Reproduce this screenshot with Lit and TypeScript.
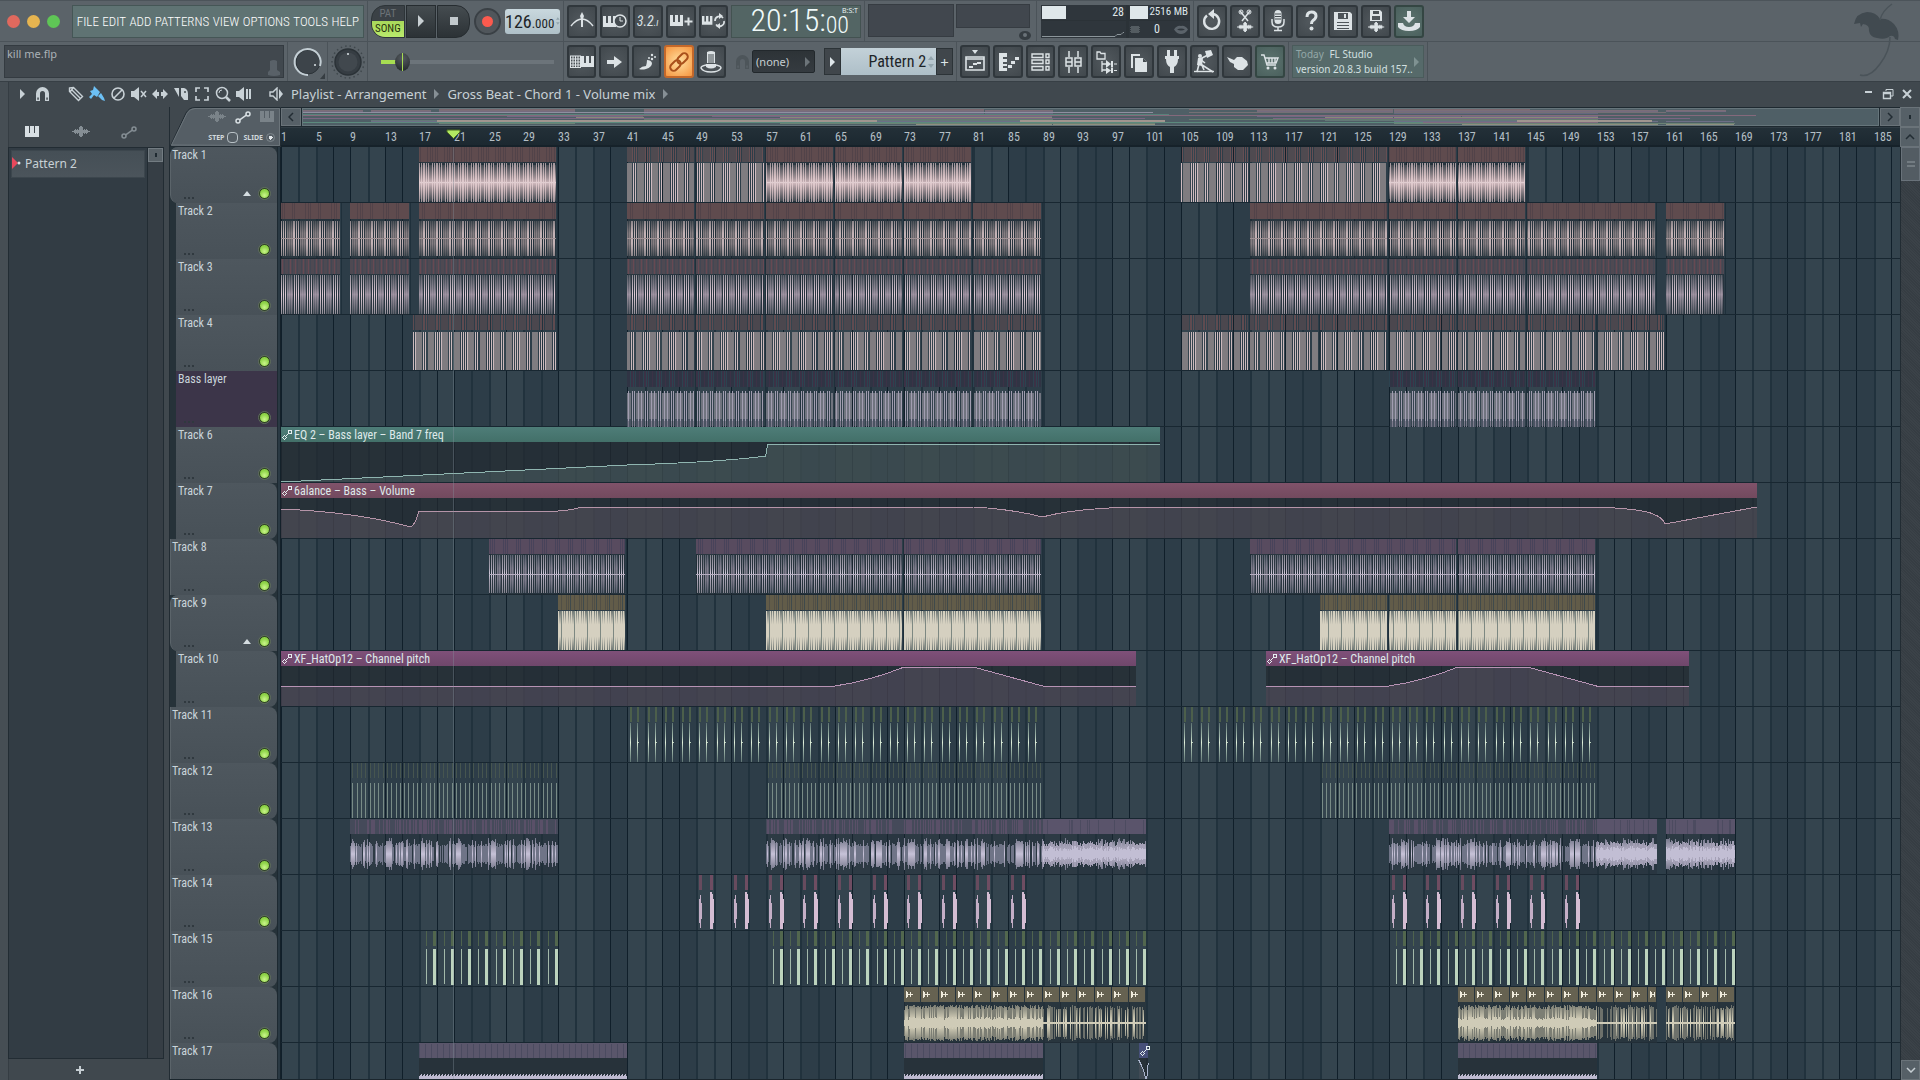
import { LitElement, html, svg, css, nothing } from "lit";
import { customElement, state } from "lit/decorators.js";

/* ---------- timeline scale ---------- */
const BAR = 8.655;
const BARS = 320;
const LANE = 56;
const px = (bar: number) => Math.round((bar - 1) * BAR);

/* ---------- song data ---------- */
type Span = [number, number];
interface Automation { from: number; to: number; title: string; head: string; line: string; curve: string }
interface Track {
  name: string;
  child?: boolean;
  fold?: boolean;
  last?: boolean;
  tint?: string;
  style?: string;
  alt?: string;
  spans?: Span[];
  altSpans?: Span[];
  autos?: Automation[];
}

const blocks = (from: number, to: number, step = 8): Span[] => {
  const out: Span[] = [];
  for (let b = from; b < to; b += step) out.push([b, Math.min(b + step, to)]);
  return out;
};

const kickSpans: Span[] = [[1, 8], [9, 16], [17, 33], ...blocks(41, 89), [113, 129], [129, 137], [137, 145], [145, 160], [161, 168]];

const X = (b: number) => (b - 1) * BAR;

const tracks: Track[] = [
  { name: "Track 1", fold: true, style: "t1a", spans: [[17, 33], ...blocks(57, 81), ...blocks(129, 145)], alt: "t1b", altSpans: [...blocks(41, 57), [105, 113], [113, 129]] },
  { name: "Track 2", child: true, style: "t2", spans: kickSpans },
  { name: "Track 3", child: true, style: "t3", spans: kickSpans },
  { name: "Track 4", child: true, style: "t4", spans: [[16.1, 33], ...blocks(41, 89), ...blocks(105, 161)] },
  { name: "Bass layer", child: true, tint: "bass", style: "t5", spans: [...blocks(41, 89), ...blocks(129, 153)] },
  {
    name: "Track 6", child: true,
    autos: [{
      from: 1, to: 102.6, title: "EQ 2 – Bass layer – Band 7 freq", head: "teal", line: "#8fb5b0",
      curve: `M0 55 L${X(41)} 38 Q${X(52)} 35 ${X(57)} 29 L${X(57) + 2} 17 L${X(102.6)} 17`,
    }],
  },
  {
    name: "Track 7", child: true, last: true,
    autos: [{
      from: 1, to: 171.5, title: "6alance – Bass – Volume", head: "rose", line: "#b594a8",
      curve: `M0 26 Q75 29 130 44 Q135 40 138 28 L${X(33)} 28 Q292 27 300 24 L${X(81)} 24 Q730 26 ${X(89)} 34 Q790 26 850 24 L${X(153)} 24 Q1365 26 1374 32 Q1381 34 1384 41 L${X(171.5)} 24`,
    }],
  },
  { name: "Track 8", last: true, style: "t8", spans: [[25, 41], [49, 73], [73, 89], [113, 137], [137, 153]] },
  { name: "Track 9", fold: true, style: "t9", spans: [[33, 41], [57, 73], [73, 89], [121, 129], [129, 137], [137, 153]] },
  {
    name: "Track 10", child: true, last: true,
    autos: [
      { from: 1, to: 99.8, title: "XF_HatOp12 – Channel pitch", head: "plum", line: "#b793b4",
        curve: `M0 35 L${X(65)} 35 Q${X(69)} 30 ${X(73)} 16 L${X(81)} 16 L${X(89)} 35 L${X(99.8)} 35` },
      { from: 114.8, to: 163.7, title: "XF_HatOp12 – Channel pitch", head: "plum", line: "#b793b4",
        curve: `M${X(114.8)} 35 L${X(129)} 35 Q${X(133)} 30 ${X(137)} 16 L${X(145)} 16 L${X(153)} 35 L${X(163.7)} 35` },
    ],
  },
  { name: "Track 11", last: true, style: "hat", spans: [[41, 89], [105, 153]] },
  { name: "Track 12", last: true, style: "shaker", spans: [[9, 33], [57, 89], [121, 153]] },
  { name: "Track 13", last: true, style: "texture", spans: [[9, 33], [57, 89], [129, 153]], alt: "textureDense", altSpans: [[89, 101], [153, 160], [161, 169]] },
  { name: "Track 14", last: true, style: "clap", spans: [[49, 89], [129, 153]] },
  { name: "Track 15", last: true, style: "perc", spans: [[17, 33], [57, 101], [129, 169]] },
  { name: "Track 16", last: true, style: "lead", spans: [[73, 89], [137, 153]], alt: "leadThin", altSpans: [[89, 101], [153, 160], [161, 169]] },
  {
    name: "Track 17", last: true, style: "pad", spans: [[17, 41], [73, 89], [137, 153]],
    autos: [{ from: 100.1, to: 101.2, title: "", head: "navy", line: "#aab4cc", curve: `M${X(100.1)} 17 Q${X(100.6)} 24 ${X(101)} 38 L${X(101.2)} 20` }],
  },
];

/* ---------- striped waveform patterns ---------- */
type Paint = [number, number, string];
interface Stripe { id: string; cols: string; map: Record<string, Paint[]> }
const stripes: Stripe[] = [
  { id: "t1a-h", cols: "bababbbbbbabbabab", map: { a: [[0, 15, "#524349"]], b: [[0, 15, "#5f4b4e"]] } },
  { id: "t1a-w", cols: "#m#d#mmm#d#m#", map: { "#": [[16, 55, "url(#g-pink)"]], m: [[18, 54, "url(#g-pinkm)"]], d: [[20, 52, "url(#g-pinkm)"]] } },
  { id: "t1b-h", cols: "a.a.a.bbbbbbb", map: { a: [[0, 15, "#674f53"]], b: [[0, 15, "#4f4a50"]] } },
  { id: "t1b-w", cols: "#.#.#.#gggggg.#.#.ggggggg.", map: { "#": [[16, 55, "#cfbabf"]], g: [[16, 55, "#7f7c80"]] } },
  { id: "t2-h", cols: "bababbbbbbbababbbbbbbbbbab", map: { a: [[0, 16, "#524349"]], b: [[0, 16, "#5f4b4e"]] } },
  { id: "t2-w", cols: "#.#.#.mdmdmd#", map: { "#": [[18, 53, "url(#g-kick)"]], m: [[18, 53, "url(#g-kickm)"]], d: [[18, 53, "url(#g-kickd)"]] } },
  { id: "t3-h", cols: "babcbbbcbabcb", map: { a: [[0, 15, "#674953"]], b: [[0, 15, "#4f4952"]], c: [[0, 15, "#434753"]] } },
  { id: "t3-w", cols: "#.#.#.mdmdmd.", map: { "#": [[16, 55, "url(#g-snare)"]], m: [[16, 55, "url(#g-snarem)"]], d: [[16, 55, "url(#g-snared)"]] } },
  { id: "t4-h", cols: "a.a.bbbbbbb.a", map: { a: [[0, 15, "#5f4b50"]], b: [[0, 15, "#4b474e"]] } },
  { id: "t4-w", cols: "#.#.#gggggg.#.#..gggggg.#.", map: { "#": [[17, 55, "#cbb9bc"]], g: [[17, 55, "#7f7c80"]] } },
  { id: "t5-h", cols: "ababcccacccba", map: { a: [[0, 16, "#3b3246"]], b: [[0, 16, "#2c4350"]], c: [[0, 16, "#303444"]] } },
  { id: "t5-w", cols: "#.#.gg#gg#gg.", map: { "#": [[20, 50, "#a19db0"], [50, 56, "#7c7a8c"]], g: [[22, 48, "#70747f"], [48, 56, "#4a5362"]] } },
  { id: "t8-h", cols: "babababbbbbbb", map: { a: [[0, 15, "#48435a"]], b: [[0, 15, "#584b5f"]] } },
  { id: "t8-w", cols: "#.#.#.m.mdmd.", map: { "#": [[16, 54, "url(#g-lilac)"]], m: [[16, 54, "url(#g-lilacm)"]], d: [[16, 54, "url(#g-lilacd)"]] } },
  { id: "t9-h", cols: "babcbbbabbbba", map: { a: [[0, 15, "#514f46"]], b: [[0, 15, "#625c49"]], c: [[0, 15, "#3f4a4c"]] } },
  { id: "t9-w", cols: "#m#m#mmg#m#m#", map: { "#": [[16, 55, "#d5d0c0"]], m: [[16, 55, "url(#g-cream)"]], g: [[16, 55, "#7d8882"]] } },
];

const patternDefs = stripes.map(s => svg`
  <pattern id=${s.id} width=${s.cols.length} height=${LANE} patternUnits="userSpaceOnUse">
    ${[...s.cols].map((c, i) => (s.map[c] ?? []).map(([a, b, f]) => svg`<rect x=${i} y=${a} width="1" height=${b - a} fill=${f}></rect>`))}
  </pattern>`);

const fade = (id: string, mid: string, edge: string, core = mid) => svg`
  <linearGradient id=${id} x1="0" x2="0" y1="0" y2="1">
    <stop offset="0" stop-color=${edge}></stop><stop offset=".35" stop-color=${mid}></stop>
    <stop offset=".5" stop-color=${core}></stop>
    <stop offset=".65" stop-color=${mid}></stop><stop offset="1" stop-color=${edge}></stop>
  </linearGradient>`;

const gradientDefs = [
  fade("g-pink", "#d6bfc2", "#a0949a", "#e2cdd0"), fade("g-pinkm", "#9f9095", "#434a51", "#d0b9bd"),
  fade("g-kick", "#c3b2b5", "#8c858a"), fade("g-kickm", "#857d81", "#4c5258"), fade("g-kickd", "#666469", "#343e46"),
  fade("g-snare", "#c8b8c4", "#8f8b95", "#e0c9d5"), fade("g-snarem", "#88838f", "#5c6069", "#a094a3"), fade("g-snared", "#6c6b78", "#39444e", "#928796"),
  fade("g-lilac", "#a9a3b4", "#85848f", "#d3cbdc"), fade("g-lilacm", "#807e8c", "#5a6270"), fade("g-lilacd", "#626474", "#333f4a"),
  fade("g-hat", "#a5bcae", "#5f7473", "#dfeeda"), fade("g-lead", "#c9c5b0", "#7c7e74", "#dedac6"),
  fade("g-tex", "#aeaabf", "#737689", "#c6c2d8"), fade("g-cream", "#d5d0c0", "#6e7674"),
];

/* deterministic pseudo-random value per pixel column */
const noise = (n: number) => {
  const v = Math.sin(n * 12.9898) * 43758.5453;
  return v - Math.floor(v);
};
const columns = (a: number, b: number, mid: number, h: (x: number) => number) => {
  let d = "";
  for (let x = a; x < b; x++) {
    const r = Math.round(h(x));
    if (r > 0) d += `M${x} ${mid - r}h1v${r * 2}h-1z`;
  }
  return d;
};

const midlines: Record<string, string> = { t1a: "#e0cdd0", t2: "#9f9194", t8: "#b5adc0" };
const shades: Record<string, boolean> = { t1a: true, t2: true, t3: true, t8: true };

function clip(style: string, [from, to]: Span) {
  const a = px(from), end = px(to), w = end - a - 2;
  const hit = (step: number, offs: number[], draw: (x: number, i: number) => unknown) => {
    const out: unknown[] = [];
    for (let t = from; t < to - 0.1; t += step) offs.forEach((o, i) => out.push(draw(Math.round(X(t) + o), i)));
    return out;
  };
  switch (style) {
    case "hat":
      return hit(2, [3, 10], (x, i) => svg`<path d="M${x} 0h2v15h-2z" fill="#4c5f4b"></path><path d="M${x} 16h1v39h-1z" fill="url(#g-hat)"></path>${i ? svg`<path d="M${x + 1} 35h1v1h-1z" fill="#b9cfbb"></path>` : nothing}`);
    case "shaker":
      return hit(0.5, [2], x => svg`<path d="M${x} 0h1v15h-1z" fill="#46554f"></path><path d="M${x} 20h1v35h-1z" fill="#788b86"></path>`);
    case "clap":
      return hit(4, [3, 14], (x, i) => i
        ? svg`<path d="M${x} 0h3v15h-3z" fill="#6f4d62"></path><path d="M${x} 17h2v2h1v5h1v24h-1v6h-3z" fill="#d5bdd3"></path>`
        : svg`<path d="M${x} 0h3v15h-3z" fill="#674b5e"></path><path d="M${x} 24h1v-4h1v8h1v16h-1v9h-1v-5h-1z" fill="#c4aec6"></path>`);
    case "perc":
      return hit(2, [7, 14], (x, i) => i
        ? svg`<path d="M${x} 0h3v15h-3z" fill="#52674e"></path><path d="M${x} 18h3v36h-3z" fill="#bcd3bd"></path>`
        : svg`<path d="M${x} 0h1v15h-1z" fill="#4f634e"></path><path d="M${x} 18h1v35h-1z" fill="#a3b9aa"></path>`);
    case "texture":
    case "textureDense": {
      const dense = style === "textureDense";
      return svg`
        <rect x=${a} y="0" width=${end - a} height="15" fill=${dense ? "#5a546b" : "#454a5a"}></rect>
        <path d=${columns(a, end, 8, x => (noise(x + 3) > (dense ? 0.86 : 0.6) ? 7 : 0))} fill=${dense ? "#4c4b60" : "#5a5068"}></path>
        <rect x=${a} y="15" width=${end - a} height="41" fill="#232e36" opacity=".4"></rect>
        <path d=${columns(a, end, 35, x => (dense ? 8 + noise(x) * 5 : noise(x + 31) > 0.2 ? 7 + noise(x) * 4 : 0))} fill=${dense ? "#a4a0b6" : "#6f7487"}></path>
        <path d=${columns(a, end, 35, x => (noise(x * 1.7) > (dense ? 0.6 : 0.72) || (!dense && x % 35 < 4) ? 11 + noise(x + 9) * 5 : 0))} fill="url(#g-tex)"></path>
        ${dense ? svg`<path d=${columns(a, end, 35, x => 3 + noise(x) * 5)} fill="#c2bed4"></path>` : nothing}`;
    }
    case "lead":
    case "leadThin": {
      const thin = style === "leadThin";
      const segs: unknown[] = [];
      for (let t = from; t < to; t += 2) {
        const s = px(t);
        const width = Math.min(px(t + 2), end) - s - 1;
        const tail = width > 10 ? 5 : 3;
        segs.push(svg`<rect x=${s} y="0" width=${width} height="15" fill="#666251"></rect>
          <path d="M${s + 2} 4h1v7h-1zM${s + 3} 5h1v5h-1zM${s + 4} 7h${tail}v1h-${tail}zM${s + 6} 5h1v5h-1z" fill="#efebdc"></path>`);
      }
      return svg`
        <rect x=${a} y="0" width=${end - a} height="56" fill="#26313a" opacity=".75"></rect>${segs}
        <path d=${columns(a, end, 36, x => (thin ? (noise(x) > 0.45 ? 14 + noise(x + 2) * 4 : 0) : 13 + noise(x) * 5))} fill=${thin ? "#6d716b" : "#7c7e74"}></path>
        <path d=${columns(a, end, 36, x => (noise(x * 1.3) > (thin ? 0.78 : 0.5) ? (thin ? 13 : 15) + noise(x + 5) * 3 : 0))} fill="url(#g-lead)"></path>
        <path d=${columns(a, end, 36, x => (thin ? 1 : 3 + noise(x) * 3))} fill="#cfcbb7"></path>`;
    }
    case "pad":
      return svg`
        <rect x=${a} y="0" width=${end - a} height="56" fill="#27323a"></rect>
        <rect x=${a} y="0" width=${end - a} height="15" fill="#5a566b"></rect>
        <path d=${columns(a, end, 8, x => (x % 6 < 1 ? 7 : 0))} fill="#4b4b60"></path>
        <path d=${columns(a, end, 56, x => 23 + (x % 3))} fill="#bdb9cf"></path>`;
    default:
      return svg`
        ${shades[style] ? svg`<rect x=${a} y="15" width=${w} height="41" fill="#1f2a32" opacity=".5"></rect>` : nothing}
        <rect x=${a} y="0" width=${w} height="16" fill="url(#${style}-h)"></rect>
        <rect x=${a} y="16" width=${w} height="40" fill="url(#${style}-w)"></rect>
        ${midlines[style] ? svg`<rect x=${a} y="35" width=${w} height="1" fill=${midlines[style]}></rect>` : nothing}
        <rect x=${end - 1} y="0" width="1" height="55" fill="#1f303b"></rect>`;
  }
}

const heads: Record<string, string> = { teal: "url(#h-teal)", rose: "url(#h-rose)", plum: "url(#h-plum)", navy: "#475079" };
const headDefs = [["teal", "#4e7d78", "#437069"], ["rose", "#80526a", "#724a5e"], ["plum", "#7f5079", "#6f476b"]].map(([n, a, b]) => svg`
  <linearGradient id="h-${n}" x1="0" x2="0" y1="0" y2="1"><stop offset="0" stop-color=${a}></stop><stop offset="1" stop-color=${b}></stop></linearGradient>`);

function automation(m: Automation) {
  const a = px(m.from), b = px(m.to);
  return svg`
    <rect x=${a} y="15" width=${b - a} height="40" fill="#222a30" opacity=".72"></rect>
    <path d="${m.curve} L${X(m.to)} 55 L${X(m.from)} 55 Z" fill=${m.line} opacity=".2"></path>
    <path d=${m.curve} fill="none" stroke=${m.line}></path>
    <rect x=${a} y="0" width=${b - a} height="15" rx="1" fill=${heads[m.head]}></rect>
    <g transform="translate(${a + 1} 2)" fill="none" stroke="#e6eef0"><circle cx="2.5" cy="8.5" r="1.7"></circle><circle cx="8" cy="3" r="1.7"></circle><path d="M3.7 7.3 6.8 4.2"></path></g>
    ${m.title ? svg`<text x=${a + 13} y="12" class="clip-title">${m.title}</text>` : nothing}`;
}

/* ---------- icons ---------- */
const icon = (body: unknown, w = 24, h = 24) => html`<svg width=${w} height=${h} viewBox="0 0 ${w} ${h}" aria-hidden="true">${body}</svg>`;
const piano = svg`<path d="M0 0h4v7h1V0h4v7h1V0h4v11H0z" fill="currentColor"></path>`;
const at = (x: number, y: number, body: unknown, s = 1) => svg`<g transform="translate(${x} ${y}) scale(${s})">${body}</g>`;
const pianoKeys = svg`<path d="M0 0h3v7h2V0h3v7h2V0h3v11H0z" fill="currentColor"></path>`;
const waveGlyph = svg`<path d="M0 5h2V4h1V3h1v1h1V3h1v1h1V1h1V0h2v1h1v3h1V3h1v1h1V3h1v1h1v1h2v1h-2v1h-1v1h-1V7h-1v1h-1V7h-1v3h-1v1H8v-1H7V7H6v1H5V7H4v1H3V7H2V6H0z" fill="currentColor"></path>`;
const autoGlyph = svg`<g fill="none" stroke="currentColor" stroke-width="1.5"><circle cx="3" cy="10" r="2"></circle><circle cx="13" cy="3" r="2"></circle><path d="M4.7 8.8 11.3 4.2"></path></g>`;
const line = (d: string, w = 2) => svg`<path d=${d} fill="none" stroke="currentColor" stroke-width=${w}></path>`;
const solid = (d: string) => svg`<path d=${d} fill="currentColor" fill-rule="evenodd"></path>`;
const magnet = svg`<path d="M0 14V6.5a6.500 6.500 0 0 1 13 0V14H9V6.500a2.500 2.500 0 0 0-5 0V14zM1.300 10.500v2.200h1.500v-2.200zm9 0v2.200h1.500v-2.200z" fill="currentColor" fill-rule="evenodd"></path>`;

const I = {
  metronome: icon([line("M1 17Q12 3 23 17", 1.5), solid("M12 3l2 4-1 3v8h-2v-8l-1-3z")]),
  wait: icon([at(0, 7, pianoKeys), svg`<circle cx="17" cy="12" r="6" fill="#454c51" stroke="currentColor" stroke-width="1.5"></circle>`, line("M17 8v4h3", 1)]),
  overdub: icon([at(1, 6, pianoKeys), line("M19.5 8.500v8M15.500 12.500h8", 2)]),
  loopRec: icon([at(0, 7, pianoKeys, 0.8), line("M13 12a4.500 4.500 0 0 1 8-3M22 12a4.500 4.500 0 0 1-8 3.500", 1.7), solid("M17 4l4 3-4 3zM18 20l-4-3 4-3z")]),
  undo: icon([line("M7 6.500a7.500 7.500 0 1 0 6-1.500", 2.4), solid("M14 0v10L8 5z")]),
  cut: icon([line("M7 2l8 10M17 2L9 12", 1.5), svg`<circle cx="8" cy="3" r="2" fill="none" stroke="currentColor"></circle><circle cx="16" cy="3" r="2" fill="none" stroke="currentColor"></circle>`, at(4, 13, waveGlyph, 0.9)]),
  mic: icon([svg`<rect x="8.5" y="1" width="7" height="14" rx="3.5" fill="currentColor"></rect>`, svg`<path d="M9 5h6M9 7.5h6M9 10h6" stroke="#454c51"></path>`, line("M6 10v3q0 5 6 5t6-5v-3M12 18v3M8 21.5h8", 1.5)]),
  help: icon([line("M8 8q0-5 4.5-5T17 7q0 2.500-3 4.500-1.500 1-1.500 3.500", 3), svg`<circle cx="12.5" cy="19.5" r="2" fill="currentColor"></circle>`]),
  save: icon([solid("M3 3h16l2 2v16H3zM7 4v6h10V4zM6 13v8h12v-8z"), solid("M13 5h2v4h-2zM6 14h12v2H6zM6 17h12v2H6zM6 20h12v1H6z")]),
  saveNew: icon([at(6, 0, solid("M0 1h10l2 2v9H0zM3 2v3h6V2zM2 7v4h8V7z")), at(4, 13, waveGlyph, 0.9)]),
  tray: icon([solid("M10 2h4v6h4l-6 6-6-6h4zM1 14h5q1 4 6 4t6-4h5v4q-3 4-11 4T1 18z")]),
  typing: icon([svg`<path d="M0 6h11M0 9h11M0 12h11M0 15h11M0 17.5h11M.5 6v12M3 6v12M5.500 6v12M8 6v12M10.500 6v12" stroke="currentColor" stroke-width="1"></path>`, at(11, 6, pianoKeys)]),
  arrow: icon([solid("M5 10h7V6l8 6-8 6v-4H5z")]),
  slide: icon([solid("M4 19q3-3 7-3 1-3 1-6 4 0 5 3 0 4-6 6-4 1-7 0z"), svg`<circle cx="14" cy="8" r="1" fill="currentColor"></circle><circle cx="17" cy="9" r="1.2" fill="currentColor"></circle><circle cx="17" cy="5" r="1.2" fill="currentColor"></circle><circle cx="20" cy="7" r="1" fill="currentColor"></circle>`]),
  link: icon([svg`<g transform="rotate(-45 12 12)" fill="none" stroke="#a9501b" stroke-width="2"><rect x="1" y="8.5" width="12" height="7" rx="3.5"></rect><rect x="11" y="8.5" width="12" height="7" rx="3.5"></rect></g>`]),
  hat: icon([solid("M8 2q4-2 8 0v11h-8z"), line("M7 15q-5 1-5 3 2 4 10 4t10-4q0-2-5-3", 1.5), solid("M7 14h10v3q-5 3-10 0z"), svg`<path d="M10 4v10M12 4v10M14 4v10" stroke="#454c51" fill="none"></path>`]),
  playlist: icon([solid("M9 0h6l-3 4z"), line("M3 7h18v13H3zM3 9h18", 1.6), solid("M6 16h4v2H6zM10 13h4v2h-4zM14 12h4v2h-4z")]),
  roll: icon([solid("M3 3h8v4H7v2h4v3H7v2h4v2H7v2h4v3H3z"), solid("M12 15h4v3h-4zM15 11h4v3h-4zM19 7h4v3h-4z")]),
  rack: icon([line("M4 4h11v3.5H4zM4 10h11v3.500H4zM4 16.500h11V20H4zM18 4h3v3.500h-3zM18 10h3v3.500h-3zM18 16.500h3V20h-3z", 1.4)]),
  mixer: icon([line("M8 1v6M17 1v6M8 17v6M17 17v6", 1.5), line("M5 8h6v8H5zM14 8h6v8h-6zM5 12h6M14 12h6", 1.5)]),
  tree: icon([line("M3 2h3l1 1.5h4V9H3zM8 11v11M8 14h4M8 20h4", 1.3), solid("M12 10l5 4-5 4zM17 11h2v6h-2zM20 13.500h3v1h-3zM12 17l5 3.500-5 3.500zM17 17.500h2V23h-2zM20 20h3v1h-3z")]),
  copy: icon([solid("M4 4h9v2H6v12H4zM8 8h8l4 4v10H8z"), svg`<path d="M16 8v4h4z" fill="#454c51"></path>`]),
  plug: icon([solid("M7 0h3v6H7zM14 0h3v6h-3zM5 6h14v3h-1q0 6-4 8v6h-4v-6q-4-2-4-8H5z")]),
  digger: icon([line("M16 5l-8 4 5 4M8 10l-3 12M9 13l3 7M7 13l14 9", 1.6), svg`<circle cx="8" cy="6" r="2" fill="currentColor"></circle>`, solid("M13 1l6-1 2 5-6 3zM6 8h5l-1 8-5-1z"), line("M2 21.500h20", 1.4)]),
  hand: icon([solid("M2 7l7 3 3-3 5 0 5 4 1 4-5 5-5 0-4-3 0-3-4-2z")]),
  cart: icon([line("M3 5h3l3 10h9M7 8h13l-2 5H9M11 8v5M14 8v5M17 8v5", 1.4), svg`<circle cx="10" cy="18" r="1.5" fill="currentColor"></circle><circle cx="17" cy="18" r="1.5" fill="currentColor"></circle>`]),
};

const small = (body: unknown) => icon(body, 16, 16);
const tools: [string, unknown, string?][] = [
  ["Draw", small([line("M1.5 2l4-.5 9 9-4 4-9-9zM4 4l8 8M5 2l-3 4", 1.4)])],
  ["Paint", small(solid("M5 0l3 3 3 3-3 5-3-2-3 4-2-2 3-3-2-3 3-1zM9 10l3-3 3 5 1 3-3-1z")), "blue"],
  ["Delete", small([svg`<circle cx="8" cy="8" r="6" fill="none" stroke="currentColor" stroke-width="1.6"></circle>`, line("M4 12L12 4", 1.6)])],
  ["Mute", small([solid("M0 5h3l5-4v14l-5-4H0z"), line("M10 5l5 6M15 5l-5 6", 1.5)])],
  ["Slip", small(solid("M0 8l5-5v3h2v4H5v3zM16 8l-5-5v3H9v4h2v3z"))],
  ["Slice", small([solid("M1 2h5v9zM8 2h3q4 1 4 6v6h-4l-3-4z"), svg`<circle cx="12" cy="6" r="1" fill="#40484e"></circle>`])],
  ["Select", small(line("M6 2H2v4M10 2h4v4M14 10v4h-4M6 14H2v-4", 1.7))],
  ["Zoom", small([svg`<circle cx="7" cy="7" r="5.5" fill="none" stroke="currentColor" stroke-width="1.5"></circle>`, line("M11 11l4 4", 2.5), line("M4 7q0-3 3-3", 1)])],
  ["Playback", small(solid("M0 5h3l5-4v14l-5-4H0zM10 3h2v10h-2zM13 3h2v10h-2z"))],
];

const btn = (label: string, body: unknown, cls = "") => html`<button class="tool ${cls}" aria-label=${label}>${body}</button>`;
const tri = html`<svg width="5" height="10" viewBox="0 0 5 10" aria-hidden="true"><path d="M0 0l5 5-5 5z" fill="currentColor"></path></svg>`;
const spin = html`<svg class="spin" width="6" height="12" viewBox="0 0 6 12" aria-hidden="true"><path d="M0 4l3-4 3 4zM0 8l3 4 3-4z" fill="#93a5ad"></path></svg>`;

/* ---------- background grid ---------- */
const gridCells: unknown[] = [];
for (let b = 1; b < BARS; b += 2) {
  const x = X(b), x0 = Math.round(x), soft = Math.abs(x - x0) > 0.25;
  gridCells.push(svg`<rect x=${x0} y="0" width="19" height="100%" fill=${(b - 1) % 8 < 4 ? "#34444e" : "#2d3d48"}></rect>
    <rect x=${x0} y="0" width=${soft ? 2 : 1} height="100%" fill=${soft ? "#21323d" : "#101f2a"}></rect>`);
}

@customElement("transport-bar")
class TransportBar extends LitElement {
  static styles = css`
    :host { display: block; flex: none; position: relative; background: #5b6369; color: #dfe6ea; font-family: "Roboto Condensed", "Liberation Sans Narrow", "Open Sans", sans-serif; border-top: 1px solid #4c545a; border-bottom: 1px solid #373f45; }
    * { box-sizing: border-box; }
    .row { display: flex; height: 40px; }
    .row + .row { border-top: 1px solid #4b5359; }
    .group { display: flex; align-items: center; gap: 3px; padding: 0 3px; border-right: 1px solid #4b5359; flex: none; }
    .open { border-right: 0; }
    button { font: inherit; color: inherit; padding: 0; margin: 0; border: 0; background: none; }
    .tool { width: 30px; height: 33px; display: grid; place-items: center; border: 2px solid #30373c; border-radius: 3px; background: radial-gradient(circle, #52595e, #41484d); color: #dde3e6; }
    .green { background: radial-gradient(circle, #5d746f, #4a605d); border-color: #344643; }
    .hot { background: radial-gradient(circle, #ffe0a0, #f6953f); border-color: #c4682a; }
    .count { font-size: 14px; font-style: italic; white-space: nowrap; }
    .count small { font-size: 10px; }
    .lights { width: 68px; display: flex; gap: 7px; padding-left: 3px; }
    .light { width: 13px; height: 13px; border-radius: 50%; }
    .r { background: #e0695e; } .y { background: #e6b450; } .g { background: #5fc556; }
    .menus { width: 293px; height: 33px; display: flex; align-items: center; justify-content: space-between; padding: 0 4px; background: #5f7373; border: 1px solid #455656; }
    .menus button { font-size: 13px; font-weight: 300; color: #ffffff; }
    .first { width: 368px; gap: 0; padding: 0 3px 0 4px; }
    .transport { width: 196px; gap: 1px; }
    .mode { width: 34px; height: 33px; display: flex; flex-direction: column; border-radius: 14px 0 0 14px; overflow: hidden; border: 1px solid #2d3438; font-size: 11px; line-height: 15px; background: #3b4146; }
    .mode button { flex: 1; color: #6b7277; }
    .mode .on { background: linear-gradient(#a9d85a, #b9ea6c); color: #26330f; }
    .pl { width: 31px; height: 33px; background: linear-gradient(#454c50, #2c3236); border: 1px solid #262c30; display: grid; place-items: center; }
    .stop { border-radius: 0 14px 14px 0; width: 33px; }
    .rec { width: 27px; height: 27px; margin: 0 3px; border-radius: 50%; border: 2px solid #3a4045; background: #50565b; display: grid; place-items: center; }
    .rec i { width: 11px; height: 11px; border-radius: 50%; background: #fb5a4e; }
    .tempo { width: 55px; height: 25px; border-radius: 3px; background: linear-gradient(#c9d8de, #afc0c8); color: #1d2428; display: flex; align-items: center; justify-content: center; gap: 2px; font-size: 13px; white-space: nowrap; }
    .tempo b { font-weight: 400; font-size: 18px; }
    .time { position: relative; width: 130px; height: 33px; background: #536564; border: 1px solid #435251; color: #f0fafa; display: flex; align-items: flex-end; justify-content: flex-end; padding: 0 11px 2px 0; font-size: 32px; line-height: 30px; font-weight: 300; }
    .time span { font-size: 24px; line-height: 20px; }
    .time em { position: absolute; right: 2px; top: 1px; font: 7px/7px "Open Sans", sans-serif; }
    .time-group { width: 301px; }
    .scopes { width: 172px; gap: 2px; align-items: flex-start; padding-top: 3px; position: relative; }
    .scope { width: 86px; height: 33px; background: #41474e; border: 1px solid #363c42; }
    .scope2 { width: 74px; height: 24px; }
    .eye { position: absolute; right: 5px; bottom: 1px; color: #363d42; }
    .cpu { width: 149px; height: 33px; display: grid; grid-template-columns: 85px 1fr; grid-template-rows: 15px 1fr; gap: 1px 3px; background: #2b3237; font-size: 12px; line-height: 14px; white-space: nowrap; }
    .cell { display: flex; min-width: 0; align-items: center; justify-content: space-between; padding: 0 2px 0 1px; background: #2f363c; }
    .cell svg { flex: none; }
    .meter { width: 24px; height: 13px; background: #dfe7ea; }
    .meter.m2 { width: 18px; }
    .mem { font-size: 11px; }
    .cpu-group { width: 157px; padding-left: 4px; }
    .tight { width: 233px; }
    .hint { width: 281px; height: 33px; background: #41484e; border: 1px solid #343b41; color: #aab2b7; font: 11px/13px "Noto Sans", sans-serif; display: flex; justify-content: space-between; padding: 1px 2px; }
    .hint svg { align-self: flex-end; color: #596168; }
    .hint-group { width: 288px; padding: 0 3px 0 4px; }
    .knob { width: 40px; justify-content: center; padding: 0; }
    .slide { width: 196px; padding: 0 9px 0 13px; }
    input[type="range"] { appearance: none; width: 100%; height: 24px; margin: 0; background: none; }
    input[type="range"]::-webkit-slider-runnable-track { height: 4px; background: linear-gradient(90deg, #a7dd52 24px, #6c747a 24px); }
    input[type="range"]::-webkit-slider-thumb { appearance: none; width: 15px; height: 18px; margin-top: -7px; border-radius: 50%; background: linear-gradient(90deg, transparent 7px, #a7dd52 7px, #a7dd52 8px, transparent 8px), radial-gradient(circle at 50% 30%, #565c61, #1d2225); }
    .pattern-group { width: 393px; }
    .snap { color: #4d555a; display: flex; margin-left: 7px; }
    .pick { position: relative; display: flex; align-items: center; }
    select { appearance: none; width: 63px; height: 23px; padding: 0 3px; background: linear-gradient(#2d3337, #353b40); border: 1px solid #22282c; border-radius: 2px; color: #c6ced2; font: 11px "Noto Sans", sans-serif; }
    .pick svg { position: absolute; right: 5px; color: #6c7479; }
    .pat { display: flex; align-items: center; margin-left: 6px; }
    .pat .end { width: 17px; height: 27px; background: #40464b; border: 1px solid #2c3337; display: grid; place-items: center; font: 15px "Open Sans", sans-serif; }
    .pat .name { width: 95px; height: 27px; background: linear-gradient(#c3d1d8, #aebfc8); color: #1d2428; font-size: 16px; display: flex; align-items: center; justify-content: flex-end; gap: 2px; padding: 0 2px; }
    .panels { width: 332px; }
    .news { width: 133px; height: 33px; background: #566a6a; border: 1px solid #4a5b5b; font: 10px/15px "Noto Sans", sans-serif; color: #d3e0e0; text-align: left; padding: 0 0 0 3px; display: flex; align-items: center; justify-content: space-between; white-space: nowrap; }
    .news i { font-style: normal; color: #94a8a8; margin-right: 3px; }
    .news svg { color: #7f9292; margin-right: 4px; }
    .news-group { width: 139px; }
    .logo { position: absolute; right: 19px; top: 2px; }
  `;
  render() {
    return html`
      <div class="row">
        <div class="group first">
          <div class="lights"><i class="light r"></i><i class="light y"></i><i class="light g"></i></div>
          <nav class="menus">${["FILE", "EDIT", "ADD", "PATTERNS", "VIEW", "OPTIONS", "TOOLS", "HELP"].map(m => html`<button>${m}</button>`)}</nav>
        </div>
        <div class="group transport">
          <div class="mode"><button>PAT</button><button class="on">SONG</button></div>
          <button class="pl" aria-label="Play"><svg width="8" height="12" viewBox="0 0 8 12"><path d="M1 0l6 6-6 6z" fill="#c9d0d4"></path></svg></button>
          <button class="pl stop" aria-label="Stop"><svg width="8" height="8"><rect width="8" height="8" fill="#c2c9cd"></rect></svg></button>
          <button class="rec" aria-label="Record"><i></i></button>
          <div class="tempo"><span><b>126</b>.000</span>${spin}</div>
        </div>
        <div class="group time-group">
          ${btn("Metronome", I.metronome)}${btn("Wait for input", I.wait)}${btn("Countdown", html`<span class="count">3.2<small>.ı</small></span>`)}${btn("Overdub", I.overdub)}${btn("Loop record", I.loopRec)}
          <div class="time">20:15:<span>00</span><em>B:S:T</em></div>
        </div>
        <div class="group scopes">
          <div class="scope"></div><div class="scope scope2"></div>
          <svg class="eye" width="12" height="9" viewBox="0 0 12 9"><ellipse cx="6" cy="4.5" rx="6" ry="4.5" fill="currentColor"></ellipse><circle cx="6" cy="4" r="2" fill="#6a7278"></circle></svg>
        </div>
        <div class="group cpu-group">
          <div class="cpu">
            <div class="cell"><i class="meter"></i><span>28</span></div><div class="cell"><i class="meter m2"></i><span class="mem">2516 MB</span></div>
            <div class="cell"><svg width="82" height="15" viewBox="0 0 82 15"><path d="M0 14.5H73l2-2h4l2-2h3" fill="none" stroke="#8c959a"></path></svg></div>
            <div class="cell"><svg width="10" height="9" viewBox="0 0 10 9"><path d="M1 1h8v7H1zM0 2h10v1H0zM0 4h10v1H0zM0 6h10v1H0z" fill="#545c61"></path></svg><span>0</span><svg width="14" height="9" viewBox="0 0 14 9"><path d="M0 4.5Q3 0 7 1q4-1 7 3.500Q11 9 7 9T0 4.500zM3 4.500q4 2 8 0-4-2-8 0z" fill="#5b636a" fill-rule="evenodd"></path></svg></div>
          </div>
        </div>
        <div class="group open tight">
          ${btn("Undo", I.undo)}${btn("Cut", I.cut)}${btn("Record audio", I.mic)}${btn("Help", I.help)}${btn("Save", I.save)}${btn("Save new version", I.saveNew)}${btn("Export", I.tray, "green")}
        </div>
      </div>
      <div class="row">
        <div class="group hint-group"><div class="hint"><span>kill me.flp</span>${icon(solid("M3 1q4-2 7 0v9l3 2v3q-6 2-12 0v-3l2-2z"), 14, 16)}</div></div>
        <div class="group knob"><svg width="34" height="36" viewBox="0 0 34 36" aria-label="Main volume"><circle cx="17" cy="18" r="12" fill="#3d444a" stroke="#2c3338" stroke-width="1"></circle><path d="M17 31A13 13 0 1 1 29 22" fill="none" stroke="#c3ced4" stroke-width="2"></path><circle cx="24" cy="21" r="1" fill="#dce4e8"></circle><path d="M29 35h5v-6z" fill="#363d42"></path></svg></div>
        <div class="group knob"><svg width="36" height="36" viewBox="0 0 36 36" aria-label="Main pitch"><circle cx="18" cy="18" r="16" fill="none" stroke="#3f474c" stroke-width="1.5" stroke-dasharray="1.5 3"></circle><circle cx="18" cy="18" r="13" fill="#363d43" stroke="#2b3237" stroke-width="1.5"></circle><circle cx="18" cy="18" r="9.5" fill="#41484e"></circle><circle cx="18" cy="10" r="1" fill="#dce4e8"></circle></svg></div>
        <div class="group slide"><input type="range" aria-label="Song position" min="0" max="100" value="9"></div>
        <div class="group pattern-group">
          ${btn("Typing keyboard", I.typing)}${btn("Auto scroll", I.arrow)}${btn("Slide notes", I.slide)}${btn("Link controls", I.link, "hot")}${btn("Multilink", I.hat)}
          <span class="snap">${icon(at(0, 1, magnet), 13, 15)}</span>
          <label class="pick"><select aria-label="Snap"><option>(none)</option></select>${tri}</label>
          <div class="pat"><button class="end" aria-label="Pattern picker">${tri}</button><button class="name">Pattern 2${spin}</button><button class="end">+</button></div>
        </div>
        <div class="group panels">
          ${btn("Playlist", I.playlist)}${btn("Piano roll", I.roll)}${btn("Channel rack", I.rack)}${btn("Mixer", I.mixer)}${btn("Browser", I.tree)}${btn("Project files", I.copy)}${btn("Plugins", I.plug)}${btn("Tempo tapper", I.digger)}${btn("Touch", I.hand)}${btn("Shop", I.cart, "green")}
        </div>
        <div class="group news-group"><button class="news"><span><i>Today</i> FL Studio<br>version 20.8.3 build 157..</span>${tri}</button></div>
      </div>
      <svg class="logo" width="48" height="76" viewBox="0 0 48 76" aria-hidden="true">
        <path d="M1 21Q3 10 14 9q9 0 13 7 8-1 14 5 6 7 4 16l-3-1q-1-4-5-3-4 4-13 2-7-1-8-7 1-6-6-7l-2 3-1-4z" fill="#414a50"></path>
        <path d="M27 17Q29 8 39 1M37 34q0 14-10 27-10 14-20 11" fill="none" stroke="#4a5359" stroke-width="1.5"></path>
      </svg>`;
  }
}

@customElement("playlist-window")
class PlaylistWindow extends LitElement {
  static styles = css`
    :host { display: flex; flex-direction: column; min-height: 0; flex: 1; background: #40484e; color: #c8d1d6; border-left: 8px solid #464e54; box-shadow: inset 1px 0 #353d43; font-family: "Noto Sans", sans-serif; }
    * { box-sizing: border-box; }
    button { font: inherit; color: inherit; padding: 0; margin: 0; border: 0; background: none; }
    svg { display: block; flex: none; }
    .title { display: flex; align-items: center; height: 25px; padding: 0 5px 2px 12px; font-size: 13px; flex: none; }
    .title button { height: 20px; display: grid; place-items: center; }
    .tools { display: flex; gap: 5px; margin: 0 17px 0 18px; }
    .mag { margin-left: 10px; }
    .blue { color: #6cc0f5; }
    .crumbs { display: flex; align-items: center; gap: 8px; white-space: nowrap; }
    .crumbs .sep { color: #868f95; }
    .win { margin-left: auto; display: flex; gap: 3px; }
    .defs { position: absolute; }
    .body { flex: 1; min-height: 0; display: flex; }
    .picker { width: 156px; margin-right: 5px; flex: none; display: flex; flex-direction: column; }
    .tabs { display: flex; height: 40px; align-items: center; gap: 31px; padding: 10px 0 0 17px; color: #d8dfe3; }
    .tabs .off { color: #858e94; }
    .list { flex: 1; display: flex; border: 1px solid #222c33; background: #323c44; }
    .items { flex: 1; padding: 2px 2px 0 2px; border-right: 1px solid #222c33; }
    .item { display: flex; align-items: center; gap: 4px; width: 100%; height: 28px; border: 1px solid #3c464d; background: linear-gradient(#454f56, #4b545b); font: 12px "Noto Sans", sans-serif; text-align: left; white-space: nowrap; padding-bottom: 2px; }
    .rail { width: 15px; background: #363e45; }
    .knobby { width: 100%; height: 14px; background: #596268; border: 1px solid #737c82; display: grid; place-items: center; }
    .add { width: 143px; height: 21px; flex: none; display: grid; place-items: center; color: #c5cdd2; }
    .arrange { flex: 1; min-width: 0; display: grid; grid-template: 20px 20px 1fr / 111px 1fr 20px; border-left: 1px solid #222c33; background: #263239; }
    .corner { grid-row: 1 / 3; position: relative; display: flex; flex-direction: column; align-items: flex-end; justify-content: space-between; padding: 4px 6px 4px 0; background: #40484e; isolation: isolate; }
    .shape { position: absolute; inset: 0; z-index: -1; }
    .modes { display: flex; gap: 9px; color: #d8dfe3; }
    .modes .off { color: #7a8389; }
    .opts { display: flex; gap: 5px; align-items: center; font: bold 7px/11px "Noto Sans", sans-serif; color: #d0d8dc; }
    .opts label { display: flex; gap: 3px; align-items: center; }
    input { appearance: none; margin: 0; width: 11px; height: 11px; border: 1px solid #b9c2c7; border-radius: 4px; }
    input[type="radio"] { width: 9px; height: 9px; border-radius: 50%; border-color: #7d868c; background: radial-gradient(circle, #e3e9ec 2px, transparent 2px); }
    .over { display: flex; border-top: 1px solid #1e2930; border-bottom: 1px solid #1e2930; gap: 1px; background: #1e2930; }
    .nudge { width: 20px; flex: none; background: #566067; border: 1px solid #6a7379; display: grid; place-items: center; color: #222c33; }
    .map { flex: 1; min-width: 0; background: #4f5f66; border: 1px solid #66757b; }
    .ruler { position: relative; overflow: hidden; background: linear-gradient(#233038, #1c2830); border-bottom: 2px solid #16222a; border-top: 1px solid #2f3b43; color: #b4bfc5; font-family: "Roboto Condensed", "Liberation Sans Narrow", "Open Sans", sans-serif; font-size: 12px; line-height: 18px; }
    .ruler span { position: absolute; }
    .mark { position: absolute; left: 165px; top: 1px; }
    .lanes { grid-column: 1 / 3; min-height: 0; overflow: hidden; position: relative; isolation: isolate; border-bottom: 1px solid #1b262d; }
    .grid { position: absolute; top: 0; left: 111px; width: calc(100% - 111px); height: 100%; z-index: -1; }
    .head-line { position: absolute; top: 0; bottom: 0; left: 283px; width: 1px; background: #8796a0; opacity: .35; }
    .track { display: flex; height: 56px; }
    .name { width: 107px; flex: none; background: linear-gradient(#4e575e, #485158); border-left: 1px solid #5b646a; color: #c9d4da; font: 12px/16px "Roboto Condensed", "Roboto", sans-serif; display: flex; flex-direction: column; justify-content: space-between; padding-left: 1px; }
    .child .name { width: 101px; margin-left: 6px; border-left: 0; padding-left: 2px; }
    .top .name { border-radius: 8px 8px 0 8px; }
    .end .name { border-radius: 0 8px 8px 0; }
    .bass .name { background: #3c3549; }
    .foot { display: flex; align-items: center; height: 19px; padding: 0 7px 0 12px; gap: 8px; }
    .child .foot { padding-left: 6px; }
    .dots { width: 11px; height: 2px; margin: 8px auto 0 0; background: repeating-linear-gradient(90deg, #30393f 0 2px, transparent 2px 4px); }
    .led { width: 11px; height: 11px; border-radius: 50%; border: 1px solid #29401a; background: radial-gradient(circle at 50% 70%, #caf58a, #8ed348 60%); outline: 1px solid #5e6d5a; }
    .edge { width: 4px; flex: none; background: linear-gradient(90deg, #1d2931 0 1px, #2a3943 1px 3px, #14212a 3px); }
    .lane { flex: 1; min-width: 0; border-bottom: 1px solid #182731; }
    .lane svg { width: 100%; height: 56px; overflow: hidden; shape-rendering: crispEdges; }
    .clip-title { font: 12px "Roboto Condensed", "Roboto", sans-serif; fill: #dfe9ea; }
    .vbar { display: flex; flex-direction: column; background: repeating-linear-gradient(45deg, #363d43 0 1px, #3b4248 1px 2px); border-left: 1px solid #222c33; }
    .vbar .nudge { width: 100%; }
    .thumb { height: 34px; background: #535c63; border: 1px solid #69727a; display: grid; place-items: center; }
    .thumb svg { color: #727b81; }
    .down { height: 20px; margin-top: auto; }
    .cell { border: 1px solid #6a7379; background: #566067; display: grid; place-items: center; color: #222c33; }
  `;

  @state() private visibleBars = 0;
  private measure = () => { this.visibleBars = Math.floor((window.innerWidth - 320) / BAR) + 1; };
  connectedCallback() {
    super.connectedCallback();
    this.measure();
    window.addEventListener("resize", this.measure);
  }
  disconnectedCallback() {
    window.removeEventListener("resize", this.measure);
    super.disconnectedCallback();
  }

  private row(t: Track) {
    const cls = ["track", t.child ? "child" : "", t.fold ? "top" : "", t.last ? "end" : "", t.tint ?? ""].join(" ");
    return html`<div class=${cls}>
      <div class="name"><span>${t.name}</span>
        <div class="foot"><i class="dots"></i>${t.fold ? html`<svg width="8" height="5" viewBox="0 0 8 5"><path d="M0 5l4-5 4 5z" fill="#d5dde1"></path></svg>` : nothing}<button class="led" aria-label="Mute ${t.name}"></button></div>
      </div>
      <i class="edge"></i>
      <div class="lane"><svg>
        ${(t.spans ?? []).map(s => clip(t.style!, s))}
        ${(t.altSpans ?? []).map(s => clip(t.alt!, s))}
        ${(t.autos ?? []).map(automation)}
      </svg></div>
    </div>`;
  }

  private overview() {
    const hues = ["#8d6c74", "#8f7680", "#87708a", "#86777c", "#6f6c8c", "#5d9284", "#9c6d86", "#7f6f92", "#a09c82", "#8f6a90", "#6c8a74", "#6f8580", "#7a7696", "#97708a", "#77937c", "#aaa48a", "#77739a"];
    const S = 8.52;
    return svg`${tracks.map((t, i) => {
      const spans: Span[] = [...(t.spans ?? []), ...(t.altSpans ?? []), ...(t.autos ?? []).map(a => [a.from, a.to] as Span)];
      return spans.map(([a, b]) => svg`<rect x=${Math.round((a - 1) * S)} y=${i} width=${Math.round((b - a) * S)} height="1" fill=${hues[i]} opacity=".7"></rect>`);
    })}
    <path d="M0 3h850v1H0z" fill="#8f8fa0"></path><path d="M134 11h440v2H134zM717 11h145v2H717zM1214 11h135v2H1214z" fill="#a0958f"></path>
    <path d="M0 13h1120v1H0z" fill="#5c8a7d"></path><path d="M0 16h80v1H0zM200 16h130v1H200zM380 16h320v1H380zM950 16h150v1H950zM1220 16h215v1h-215z" fill="#a08078"></path>`;
  }

  render() {
    const labels: unknown[] = [];
    for (let b = 1; b <= this.visibleBars; b += 4) labels.push(html`<span style="left:${px(b)}px">${b}</span>`);
    return html`
      <svg class="defs" width="0" height="0" aria-hidden="true"><defs>${gradientDefs}${headDefs}${patternDefs}</defs></svg>
      <header class="title">
        <button aria-label="Playlist menu">${tri}</button>
        <button class="mag" aria-label="Snap to grid">${icon(at(1, 1, magnet), 15, 16)}</button>
        <div class="tools">${tools.map(([l, g, c]) => html`<button class=${c ?? ""} aria-label=${l}>${g}</button>`)}</div>
        <div class="crumbs">
          ${icon([line("M1 5h3l4-4v12L4 9H1z", 1.4), solid("M10 2l4 5-4 5z")], 14, 14)}
          <span>Playlist - Arrangement</span><span class="sep">${tri}</span><span>Gross Beat - Chord 1 - Volume mix</span><span class="sep">${tri}</span>
        </div>
        <div class="win">
          <button aria-label="Minimize">${small(solid("M4 5h7v2H4z"))}</button>
          <button aria-label="Restore">${small([line("M6 5V3.5h7V10h-2", 1), line("M3.5 6.500h7v6h-7zM3 7.500h8", 1.4)])}</button>
          <button aria-label="Close">${small(line("M4 4l8 8M12 4l-8 8", 2))}</button>
        </div>
      </header>
      <div class="body">
        <aside class="picker">
          <div class="tabs">
            <button aria-label="Patterns">${icon(piano, 16, 12)}</button>
            <button class="off" aria-label="Audio clips">${icon(waveGlyph, 18, 12)}</button>
            <button class="off" aria-label="Automation clips">${icon(autoGlyph, 16, 13)}</button>
          </div>
          <div class="list">
            <div class="items"><button class="item"><svg width="9" height="12" viewBox="0 0 9 12"><path d="M0 0l6 6-6 6z" fill="#e8485c"></path><circle cx="7" cy="6" r="1.5" fill="#d8dfe3"></circle></svg>Pattern 2</button></div>
            <div class="rail"><div class="knobby"><svg width="2" height="4"><rect width="2" height="4" fill="#1f2a31"></rect></svg></div></div>
          </div>
          <button class="add" aria-label="Add pattern">${icon(solid("M3 0h2v3h3v2H5v3H3V5H0V3h3z"), 8, 8)}</button>
        </aside>
        <section class="arrange">
          <div class="corner">
            <svg class="shape" width="111" height="40" viewBox="0 0 111 40"><path d="M0 39.5 16 6Q19 .5 25 .5H110.500V39.500z" fill="#555e65" stroke="#222c33"></path><path d="M1.5 38 17 6.500Q20 1.500 25 1.500H109.500V38.500z" fill="none" stroke="#6b747a"></path></svg>
            <div class="modes"><span class="off">${icon(waveGlyph, 18, 12)}</span><span>${icon(autoGlyph, 16, 13)}</span><span class="off">${icon(piano, 15, 12)}</span></div>
            <div class="opts"><label>STEP<input type="checkbox"></label><label>SLIDE <input type="radio"></label></div>
          </div>
          <div class="over">
            <button class="nudge" aria-label="Scroll left">${icon(line("M5 1L1 5l4 4", 1.5), 6, 10)}</button>
            <svg class="map" height="18">${this.overview()}</svg>
            <button class="nudge" aria-label="Scroll right">${icon(line("M1 1l4 4-4 4", 1.5), 6, 10)}</button>
          </div>
          <button class="cell" aria-label="Zoom"><svg width="2" height="4"><rect width="2" height="4" fill="#1f2a31"></rect></svg></button>
          <div class="ruler">${labels}<svg class="mark" width="15" height="10" viewBox="0 0 15 10"><path d="M1 1h13v2l-6.5 6.500L1 3z" fill="#b3ea62" stroke="#4b6a22"></path></svg></div>
          <button class="cell" aria-label="Scroll up">${icon(line("M1 5l4-4 4 4", 1.5), 10, 6)}</button>
          <div class="lanes">
            <svg class="grid">${gridCells}</svg>
            ${tracks.map(t => this.row(t))}
            <i class="head-line"></i>
          </div>
          <div class="vbar">
            <div class="thumb"><svg width="8" height="6" viewBox="0 0 8 6"><path d="M0 0h8v2H0zM0 4h8v2H0z" fill="currentColor"></path></svg></div>
            <button class="nudge down" aria-label="Scroll down">${icon(svg`<path d="M1 1l4 4 4-4" fill="none" stroke="#c5cdd2" stroke-width="1.5"></path>`, 10, 6)}</button>
          </div>
        </section>
      </div>`;
  }
}

@customElement("app-root")
class AppRoot extends LitElement {
  static styles = css`
    :host { display: flex; flex-direction: column; height: 100vh; overflow: hidden; background: #40484e; }
  `;
  render() {
    return html`<transport-bar></transport-bar><playlist-window></playlist-window>`;
  }
}
